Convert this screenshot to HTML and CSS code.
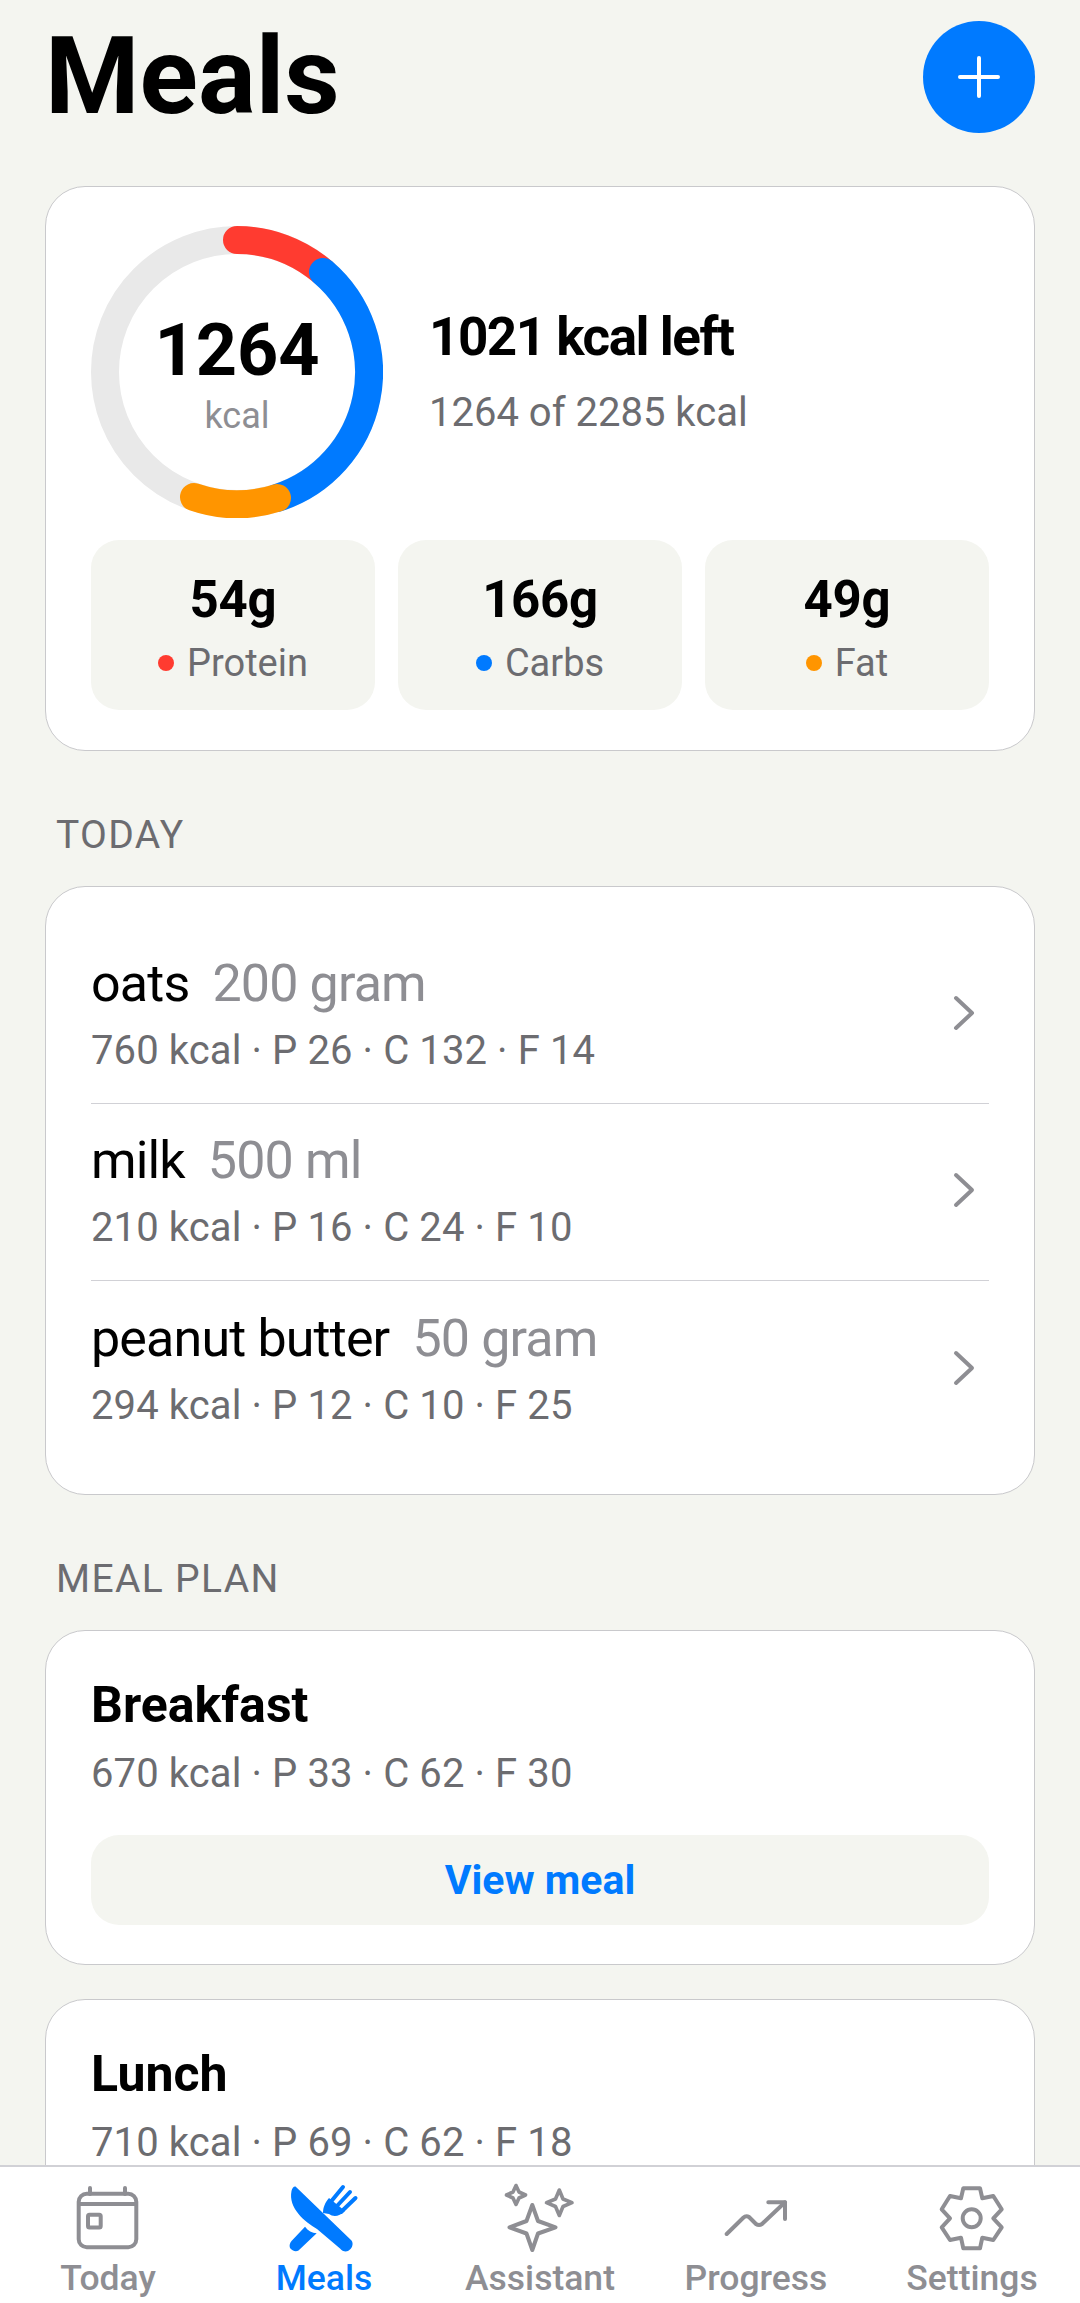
FILE: index.html
```html
<!DOCTYPE html>
<html lang="en">
<head>
    <meta charset="UTF-8">
    <meta name="viewport" content="width=device-width, initial-scale=1.0">
    <title>Meals</title>
    <link rel="stylesheet" href="styles.css">
</head>
<body>
    <div class="app">
        <main class="content">
            <header class="topo">
                <h1 class="titulo">Meals</h1>
                <div class="add">
                    <svg width="48" height="48" viewBox="0 0 48 48"><path d="M24 5v38M5 24h38" stroke="#fff" stroke-width="4" stroke-linecap="round"/></svg>
                </div>
            </header>

            <section class="card resumo">
                <div class="resumo-topo">
                    <div class="anel">
                        <svg width="292" height="292" viewBox="0 0 292 292">
                            <circle cx="146" cy="146" r="132" fill="none" stroke="#e9e9e9" stroke-width="28"/>
                            <path d="M146 14A132 132 0 0 1 232 46" fill="none" stroke="#ff3b30" stroke-width="28" stroke-linecap="round"/>
                            <path d="M232 46A132 132 0 0 1 186 272" fill="none" stroke="#007aff" stroke-width="28" stroke-linecap="round"/>
                            <path d="M186 272A132 132 0 0 1 103 271" fill="none" stroke="#ff9500" stroke-width="28" stroke-linecap="round"/>
                        </svg>
                        <div class="anel-texto">
                            <div class="anel-valor">1264</div>
                            <div class="anel-un">kcal</div>
                        </div>
                    </div>
                    <div>
                        <div class="restante">1021 kcal left</div>
                        <div class="consumo">1264 of 2285 kcal</div>
                    </div>
                </div>
                <div class="macros">
                    <div class="macro">
                        <div class="macro-valor">54g</div>
                        <div class="macro-nome"><span class="ponto vermelho"></span>Protein</div>
                    </div>
                    <div class="macro">
                        <div class="macro-valor">166g</div>
                        <div class="macro-nome"><span class="ponto azul"></span>Carbs</div>
                    </div>
                    <div class="macro">
                        <div class="macro-valor">49g</div>
                        <div class="macro-nome"><span class="ponto laranja"></span>Fat</div>
                    </div>
                </div>
            </section>

            <h2 class="secao">TODAY</h2>
            <section class="card lista">
                <div class="item">
                    <div class="item-info">
                        <div class="item-nome">oats<span class="item-qtd">200 gram</span></div>
                        <div class="detalhe">760 kcal · P 26 · C 132 · F 14</div>
                    </div>
                    <svg class="seta" width="24" height="36" viewBox="0 0 24 36"><path d="M3 3l16 15L3 33" fill="none" stroke="#8e8e93" stroke-width="4" stroke-linecap="round" stroke-linejoin="round"/></svg>
                </div>
                <div class="item">
                    <div class="item-info">
                        <div class="item-nome">milk<span class="item-qtd">500 ml</span></div>
                        <div class="detalhe">210 kcal · P 16 · C 24 · F 10</div>
                    </div>
                    <svg class="seta" width="24" height="36" viewBox="0 0 24 36"><path d="M3 3l16 15L3 33" fill="none" stroke="#8e8e93" stroke-width="4" stroke-linecap="round" stroke-linejoin="round"/></svg>
                </div>
                <div class="item">
                    <div class="item-info">
                        <div class="item-nome">peanut butter<span class="item-qtd">50 gram</span></div>
                        <div class="detalhe">294 kcal · P 12 · C 10 · F 25</div>
                    </div>
                    <svg class="seta" width="24" height="36" viewBox="0 0 24 36"><path d="M3 3l16 15L3 33" fill="none" stroke="#8e8e93" stroke-width="4" stroke-linecap="round" stroke-linejoin="round"/></svg>
                </div>
            </section>

            <h2 class="secao">MEAL PLAN</h2>
            <section class="card refeicao">
                <div class="refeicao-nome">Breakfast</div>
                <div class="detalhe">670 kcal · P 33 · C 62 · F 30</div>
                <div class="botao">View meal</div>
            </section>
            <section class="card refeicao">
                <div class="refeicao-nome">Lunch</div>
                <div class="detalhe">710 kcal · P 69 · C 62 · F 18</div>
            </section>
        </main>

        <nav class="abas">
            <div class="aba">
                <svg width="66" height="66" viewBox="0 0 66 66" fill="none" stroke="#8e8e93" stroke-width="4"><rect x="3.7" y="9.7" width="57.6" height="53.6" rx="8"/><path d="M3.7 20h57.6"/><path d="M15 4v6M50 4v6" stroke-linecap="round"/><rect x="13" y="30.7" width="12.7" height="12.7" rx="1.5"/></svg>
                <span>Today</span>
            </div>
            <div class="aba ativa">
                <svg width="66" height="66" viewBox="0 0 66 66" fill="#007aff"><path d="M4.5 2.5L60.5 56.5C63 60 61 65 57 67C54 68 51 67 49 64.5L26 45C14 38 -3 24 0.5 7C1 4 3 2 4.5 2.5Z"/><path d="M14 42.7C17 47 21 49 25.7 49.3L7.5 66.5C5 68 1 67 -1 64C-2 61 -1 59 0.5 57Z"/><path d="M38 14L54 27C48 33 42 33 38 30L32 29C32 23 34 19 38 14Z"/><path d="M38 20L52 3M45 23L59 8M50 28L64.5 14" stroke="#007aff" stroke-width="4" stroke-linecap="round"/></svg>
                <span>Meals</span>
            </div>
            <div class="aba">
                <svg width="66" height="66" viewBox="0 0 66 66" fill="none" stroke="#8e8e93" stroke-width="4" stroke-linejoin="round"><path d="M25.3 21L31 37L48.5 43.3L31 49.5L25.3 66L19.5 49.5L2.5 43.3L19.5 37Z"/><path d="M9 1.5L12 8L18.5 11L12 14L9 20.5L6 14L-0.5 11L6 8Z" stroke-width="3.6"/><path d="M52.3 6L56 15L65 18.7L56 22.5L52.3 31.5L48.5 22.5L39.5 18.7L48.5 15Z" stroke-width="3.6"/></svg>
                <span>Assistant</span>
            </div>
            <div class="aba">
                <svg width="66" height="66" viewBox="0 0 66 66" fill="none" stroke="#8e8e93" stroke-width="4" stroke-linecap="round" stroke-linejoin="round"><path d="M3.7 50L20 34Q23 31 26 33L33 40Q36 42 39 40L62 18.3"/><path d="M45.3 18.3H62V35"/></svg>
                <span>Progress</span>
            </div>
            <div class="aba">
                <svg width="66" height="66" viewBox="0 0 66 66" fill="none" stroke="#8e8e93" stroke-width="4" stroke-linejoin="round"><path d="M24.3 4.3H41L43.3 14.3L54.3 12L62.7 25.3L54.3 34.3L62.7 43.3L54.3 56L43.3 53.7L41 64.3H24.3L22 53.7L11 56L2.7 43.3L11 34.3L2.7 25.3L11 12L22 14.3Z"/><circle cx="32.7" cy="34.3" r="9"/></svg>
                <span>Settings</span>
            </div>
        </nav>
    </div>
</body>
</html>
```

FILE: styles.css
```css
* {
    box-sizing: border-box;
}
html, body {
    margin: 0;
    height: 100%;
}
body {
    font-family: Roboto, "Liberation Sans", sans-serif;
    background-color: #f4f5f0;
    color: #000;
}
.app {
    height: 2303px;
    display: flex;
    flex-direction: column;
    overflow: hidden;
}
.content {
    flex: 1;
    min-height: 0;
    overflow: hidden;
    padding: 21px 45px 0;
}
.topo {
    display: flex;
    justify-content: space-between;
    align-items: center;
    height: 112px;
    margin-bottom: 53px;
}
.titulo {
    font-size: 108px;
    font-weight: 700;
    line-height: 112px;
    margin: 0 0 2px;
}
.add {
    width: 112px;
    height: 112px;
    border-radius: 50%;
    background: #007aff;
    display: flex;
    align-items: center;
    justify-content: center;
}
.card {
    background: white;
    border: 1px solid #c9c9cc;
    border-radius: 40px;
    padding: 0 45px;
}
.resumo {
    height: 565px;
    padding-top: 39px;
}
.resumo-topo {
    display: flex;
    align-items: center;
    gap: 46px;
}
.anel {
    position: relative;
    width: 292px;
    height: 292px;
}
.anel svg {
    display: block;
}
.anel-texto {
    position: absolute;
    inset: 0;
    padding-top: 6px;
    display: flex;
    flex-direction: column;
    align-items: center;
    justify-content: center;
}
.anel-valor {
    font-size: 72px;
    font-weight: 700;
    line-height: 76px;
}
.anel-un {
    font-size: 36px;
    line-height: 44px;
    color: #8e8e93;
    margin-top: 5px;
}
.restante {
    font-size: 53px;
    font-weight: 700;
    line-height: 60px;
    letter-spacing: -1.5px;
    margin-bottom: 21px;
}
.consumo {
    font-size: 40px;
    line-height: 50px;
    color: #6c6c70;
}
.macros {
    display: grid;
    grid-template-columns: repeat(3, 1fr);
    gap: 23px;
    margin-top: 22px;
}
.macro {
    height: 170px;
    background: #f4f5f0;
    border-radius: 28px;
    text-align: center;
    padding-top: 30px;
}
.macro-valor {
    font-size: 51px;
    font-weight: 700;
    line-height: 60px;
    letter-spacing: -0.3px;
}
.macro-nome {
    display: flex;
    align-items: center;
    justify-content: center;
    gap: 13px;
    font-size: 38px;
    line-height: 46px;
    color: #6c6c70;
    margin-top: 10px;
}
.ponto {
    width: 16px;
    height: 16px;
    border-radius: 50%;
}
.vermelho {
    background: #ff3b30;
}
.azul {
    background: #007aff;
}
.laranja {
    background: #ff9500;
}
.secao {
    font-size: 39px;
    font-weight: 400;
    line-height: 46px;
    letter-spacing: 1.35px;
    color: #6c6c70;
    margin: 61px 0 28px 11px;
}
.lista {
    padding-top: 40px;
    padding-bottom: 36px;
}
.item {
    display: flex;
    align-items: center;
    justify-content: space-between;
    height: 177px;
    border-bottom: 1px solid #d1d1d6;
}
.item:last-child {
    border-bottom: none;
}
.seta {
    margin: 0 12px 4px 0;
}
.item-nome {
    font-size: 52px;
    line-height: 60px;
    letter-spacing: -0.85px;
}
.item-qtd {
    color: #8e8e93;
    margin-left: 23px;
}
.detalhe {
    font-size: 40px;
    line-height: 50px;
    letter-spacing: 0.1px;
    color: #6c6c70;
    margin-top: 12px;
}
.refeicao {
    padding-top: 44px;
    margin-bottom: 34px;
    height: 335px;
}
.refeicao .detalhe {
    margin-top: 14px;
}
.refeicao-nome {
    font-size: 50px;
    font-weight: 700;
    line-height: 60px;
}
.botao {
    height: 90px;
    margin-top: 36px;
    background: #f4f5f0;
    border-radius: 28px;
    color: #007aff;
    font-size: 41px;
    font-weight: 700;
    display: flex;
    align-items: center;
    justify-content: center;
}
.abas {
    height: 138px;
    flex-shrink: 0;
    display: grid;
    grid-template-columns: repeat(5, 1fr);
    background: white;
    border-top: 2px solid #d1d1d6;
    padding-top: 17px;
}
.aba {
    display: flex;
    flex-direction: column;
    align-items: center;
    color: #8e8e93;
    font-size: 35.5px;
    font-weight: 500;
    line-height: 44px;
}
.aba svg {
    flex-shrink: 0;
    overflow: visible;
    margin-bottom: 6px;
}
.ativa {
    color: #007aff;
}
```
